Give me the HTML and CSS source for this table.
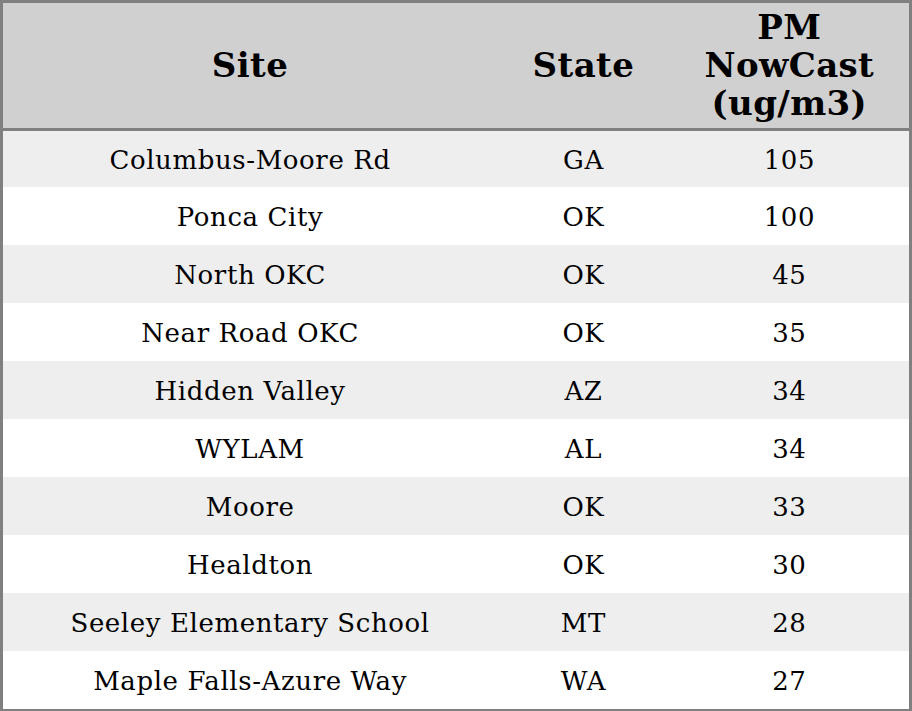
FILE: index.html
```html
<!DOCTYPE html>
<html>
<head>
<meta charset="utf-8">
<link rel="stylesheet" href="styles.css">
</head>
<body>
<table class="aq">
  <colgroup>
    <col class="c-site">
    <col class="c-state">
    <col class="c-pm">
  </colgroup>
  <thead>
    <tr><th>Site</th><th>State</th><th>PM<br>NowCast<br>(ug/m3)</th></tr>
  </thead>
  <tbody>
    <tr><td>Columbus-Moore Rd</td><td>GA</td><td>105</td></tr>
    <tr><td>Ponca City</td><td>OK</td><td>100</td></tr>
    <tr><td>North OKC</td><td>OK</td><td>45</td></tr>
    <tr><td>Near Road OKC</td><td>OK</td><td>35</td></tr>
    <tr><td>Hidden Valley</td><td>AZ</td><td>34</td></tr>
    <tr><td>WYLAM</td><td>AL</td><td>34</td></tr>
    <tr><td>Moore</td><td>OK</td><td>33</td></tr>
    <tr><td>Healdton</td><td>OK</td><td>30</td></tr>
    <tr><td>Seeley Elementary School</td><td>MT</td><td>28</td></tr>
    <tr><td>Maple Falls-Azure Way</td><td>WA</td><td>27</td></tr>
  </tbody>
</table>
</body>
</html>
```
FILE: styles.css
```css
html, body {
  margin: 0;
  padding: 0;
  background: #ffffff;
}
.aq {
  width: 912px;
  border-collapse: collapse;
  border: 3px solid #808080;
  font-family: "DejaVu Serif", serif;
  color: #000;
  table-layout: fixed;
}
.c-site { width: 494px; }
.c-state { width: 172px; }
.c-pm { width: 240px; }
.aq th {
  background: #d0d0d0;
  font-size: 34px;
  letter-spacing: 0.4px;
  font-weight: bold;
  line-height: 37.7px;
  height: 124px;
  padding: 1px 0 0;
  text-align: center;
  vertical-align: middle;
  border-bottom: 3px solid #808080;
}
.aq td {
  font-size: 26px;
  letter-spacing: 0.6px;
  height: 56px;
  padding: 2px 0 0;
  text-align: center;
  vertical-align: middle;
}
.aq tbody tr:first-child td {
  height: 54px;
}
.aq tbody tr:nth-child(odd) td {
  background: #eeeeee;
}
```
